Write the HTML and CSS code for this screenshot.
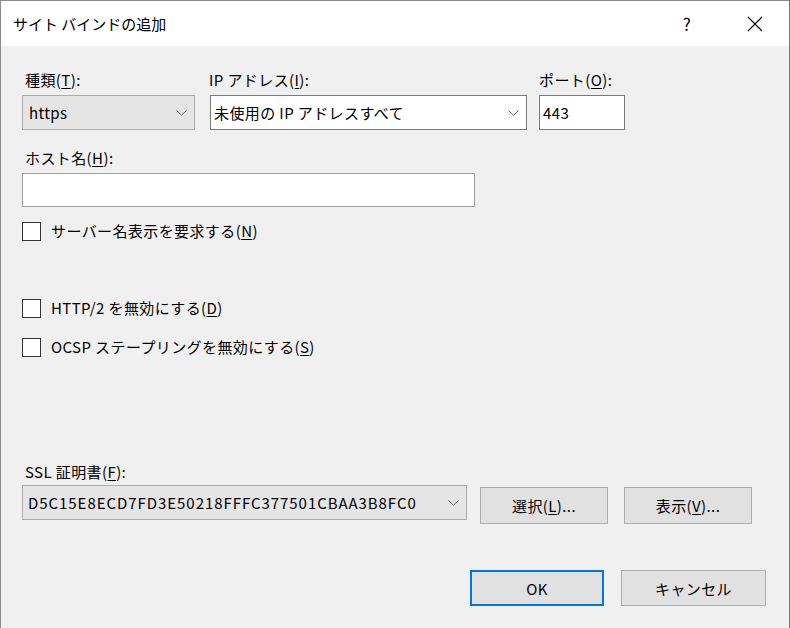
FILE: index.html
```html
<!DOCTYPE html>
<html lang="ja">
<head>
<meta charset="utf-8">
<title>サイト バインドの追加</title>
<link rel="stylesheet" href="styles.css">
</head>
<body>
<div class="window">
  <div class="titlebar">
    <span class="title">サイト バインドの追加</span>
    <span class="help">?</span>
    <span class="close">
      <svg width="16" height="16" viewBox="0 0 16 16"><path d="M1 1 L15 15 M15 1 L1 15" stroke="#000" stroke-width="1.1" fill="none"/></svg>
    </span>
  </div>
  <div class="content">
    <div class="row1">
      <div class="field f-type">
        <div class="lbl lbl-first">種類(<u>T</u>):</div>
        <div class="combo combo-ro">
          <span class="val">https</span>
          <svg class="chev" width="11" height="6" viewBox="0 0 11 6"><polyline points="0.5,0.5 5.5,5.2 10.5,0.5" fill="none" stroke="#606060" stroke-width="1"/></svg>
        </div>
      </div>
      <div class="field f-ip">
        <div class="lbl lbl-ip">IP アドレス(<u>I</u>):</div>
        <div class="combo combo-edit">
          <span class="val">未使用の IP アドレスすべて</span>
          <svg class="chev" width="11" height="6" viewBox="0 0 11 6"><polyline points="0.5,0.5 5.5,5.2 10.5,0.5" fill="none" stroke="#606060" stroke-width="1"/></svg>
        </div>
      </div>
      <div class="field f-port">
        <div class="lbl">ポート(<u>O</u>):</div>
        <div class="textbox port"><span class="val">443</span></div>
      </div>
    </div>

    <div class="host">
      <div class="lbl lbl-first">ホスト名(<u>H</u>):</div>
      <div class="textbox hostbox"></div>
    </div>

    <div class="check c-sni"><span class="box"></span><span class="ctext">サーバー名表示を要求する(<u>N</u>)</span></div>
    <div class="check c-http2"><span class="box"></span><span class="ctext">HTTP/2 を無効にする(<u>D</u>)</span></div>
    <div class="check c-ocsp"><span class="box"></span><span class="ctext">OCSP ステープリングを無効にする(<u>S</u>)</span></div>

    <div class="ssl">
      <div class="lbl lbl-first">SSL 証明書(<u>F</u>):</div>
      <div class="ssl-row">
        <div class="combo combo-ro ssl-combo">
          <span class="val thumb">D5C15E8ECD7FD3E50218FFFC377501CBAA3B8FC0</span>
          <svg class="chev" width="11" height="6" viewBox="0 0 11 6"><polyline points="0.5,0.5 5.5,5.2 10.5,0.5" fill="none" stroke="#606060" stroke-width="1"/></svg>
        </div>
        <div class="btn btn-select">選択(<u>L</u>)...</div>
        <div class="btn btn-view">表示(<u>V</u>)...</div>
      </div>
    </div>

    <div class="footer">
      <div class="btn btn-ok">OK</div>
      <div class="btn btn-cancel">キャンセル</div>
    </div>
  </div>
</div>
</body>
</html>
```

FILE: styles.css
```css
* { box-sizing: border-box; }
html, body { margin: 0; padding: 0; }
body {
  font-family: "Noto Sans CJK JP", "Noto Sans", sans-serif;
  font-size: 15px;
  letter-spacing: 0.4px;
  color: #000;
  background: #f0f0f0;
}
u { text-decoration-thickness: 1px; text-underline-offset: 2px; }

.window {
  width: 790px;
  height: 628px;
  border-top: 1px solid #8a8a8a;
  border-left: 1px solid #8a8a8a;
  border-right: 1px solid #7a7a7a;
  background: #f0f0f0;
  display: flex;
  flex-direction: column;
}

.titlebar {
  height: 45px;
  background: #fff;
  display: flex;
  align-items: center;
  padding-left: 12px;
  flex-shrink: 0;
}
.title { font-size: 15px; letter-spacing: 0; flex: 1; line-height: 20px; }
.help { font-size: 17px; width: 20px; margin-right: 50px; text-align: center; line-height: 20px; }
.close { display: flex; width: 16px; height: 16px; margin-right: 26px; }

.content {
  padding: 24px 23px 0 21px;
  display: flex;
  flex-direction: column;
}

.lbl { height: 20px; line-height: 20px; white-space: nowrap; }
.lbl-first { padding-left: 3px; }
.lbl-ip { margin-left: -1px; }

.row1 { display: flex; }
.field { display: flex; flex-direction: column; gap: 5px; }
.f-type { width: 173px; }
.f-ip { width: 317px; margin-left: 15px; }
.f-port { width: 86px; margin-left: 12px; }

.combo, .textbox {
  height: 35px;
  display: flex;
  align-items: center;
  white-space: nowrap;
}
.combo-ro { background: #e5e5e5; border: 1px solid #adadad; padding: 0 7px 0 6px; }
.combo-edit { background: #fff; border: 1px solid #7a7a7a; padding: 0 7px 0 3px; }
.textbox { background: #fff; border: 1px solid #7a7a7a; padding: 0 3px; }
.combo .val { flex: 1; overflow: hidden; }
.chev { display: block; flex-shrink: 0; }

.host { margin-top: 18px; display: flex; flex-direction: column; gap: 5px; }
.hostbox { width: 453px; height: 34px; border-color: #a0a0a0; }

.check { display: flex; align-items: center; height: 20px; }
.box {
  width: 19px; height: 19px;
  border: 1px solid #333;
  background: #fff;
  margin-right: 10px;
  flex-shrink: 0;
}
.ctext { line-height: 20px; white-space: nowrap; }
.c-sni { margin-top: 14px; }
.c-http2 { margin-top: 57px; }
.c-ocsp { margin-top: 19px; }

.ssl { margin-top: 105px; display: flex; flex-direction: column; gap: 3px; }
.ssl-row { display: flex; align-items: flex-start; }
.ssl-combo { width: 445px; padding-left: 5px; }
.thumb { letter-spacing: 0.95px; }

.btn {
  background: #e1e1e1;
  border: 1px solid #adadad;
  display: flex;
  align-items: center;
  justify-content: center;
  white-space: nowrap;
}
.btn-select { width: 128px; height: 37px; margin-top: 2px; margin-left: 13px; }
.btn-view { width: 128px; height: 37px; margin-top: 2px; margin-left: 16px; }

.footer { margin-top: 46px; display: flex; justify-content: flex-end; }
.btn-ok { width: 134px; height: 36px; border: 2px solid #0078d7; }
.btn-cancel { width: 145px; height: 36px; margin-left: 17px; }
```
